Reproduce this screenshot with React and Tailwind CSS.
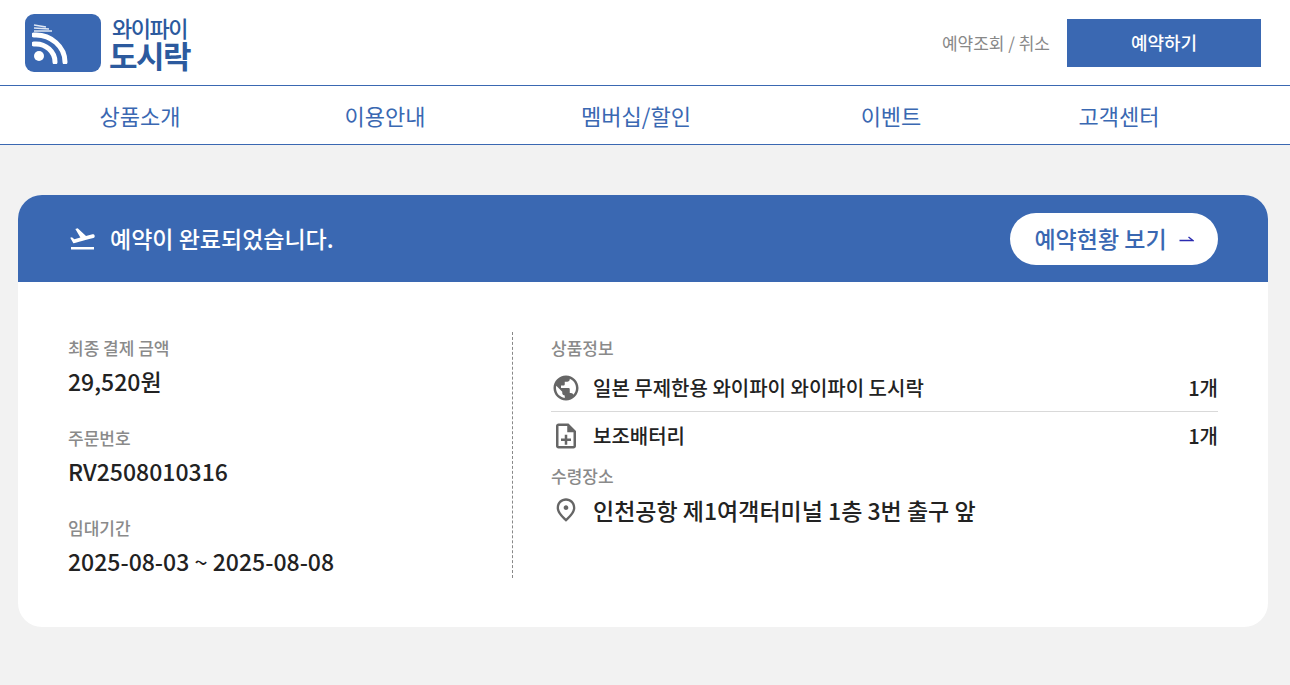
import { MdFlightTakeoff, MdPublic, MdOutlineNoteAdd, MdOutlinePlace } from "react-icons/md";

const navItems = [
  { label: "상품소개", width: "w-[244px]" },
  { label: "이용안내", width: "w-[246px]" },
  { label: "멤버십/할인", width: "w-[256px]" },
  { label: "이벤트", width: "w-[254px]" },
  { label: "고객센터", width: "w-[202px]" },
];

function Logo() {
  return (
    <div className="flex items-center gap-[8px]">
      <div className="flex h-[58px] w-[76px] items-center justify-start rounded-[9px] bg-[#3a68b2] pl-[7px]">
        <svg width="36" height="42" viewBox="0 0 36 42" fill="none">
          <circle cx="7" cy="34" r="5" fill="#fff" />
          <path d="M2 22 C14 21 23 30 23 40" stroke="#fff" strokeWidth="5" strokeLinecap="round" />
          <path d="M2 13 C19 12 33 25 33 40" stroke="#fff" strokeWidth="5" strokeLinecap="round" />
          <path d="M2 3 L14 5 M2 6 L17 7 M2 9 L20 9" stroke="#dfe7f4" strokeWidth="1.5" />
        </svg>
      </div>
      <div className="flex flex-col items-center">
        <span className="text-[22px] leading-[24px] font-medium tracking-[-1.5px] text-[#2c5a9e]">와이파이</span>
        <span className="text-[31px] leading-[32px] font-bold tracking-[-1.5px] text-[#2c5a9e]">도시락</span>
      </div>
    </div>
  );
}

function Info({ label, value }) {
  return (
    <div>
      <p className="text-[17px] leading-[24px] font-medium text-[#8a8a8a]">{label}</p>
      <p className="mt-[6px] text-[23px] leading-[30px] font-medium text-[#222]">{value}</p>
    </div>
  );
}

function ProductRow({ icon, name, count, border }) {
  return (
    <div className={`flex h-[48px] items-center ${border ? "border-b border-[#d9d9d9]" : ""}`}>
      <span className="flex w-[30px] justify-center text-[#666]">{icon}</span>
      <span className="ml-[12px] flex-1 text-[20px] font-medium text-[#222]">{name}</span>
      <span className="text-[20px] font-medium text-[#222]">{count}</span>
    </div>
  );
}

export default function App() {
  return (
    <div className="min-h-screen bg-[#f2f2f2] font-['Noto_Sans_CJK_KR','Noto_Sans',sans-serif]">
      <header className="flex h-[86px] items-center justify-between border-b border-[#3a68b2] bg-white pr-[29px] pl-[25px]">
        <Logo />
        <div className="flex items-center gap-[17px]">
          <a className="text-[17px] text-[#888]">예약조회 / 취소</a>
          <button className="h-[48px] w-[194px] bg-[#3a68b2] text-[18px] font-medium text-white">예약하기</button>
        </div>
      </header>

      <nav className="flex h-[59px] items-center border-b border-[#3a68b2] bg-white pl-[18px]">
        {navItems.map((item) => (
          <a key={item.label} className={`${item.width} text-center text-[22px] text-[#3a68b2]`}>
            {item.label}
          </a>
        ))}
      </nav>

      <main className="px-[18px] pt-[50px] pb-[50px]">
        <section className="w-[1250px] overflow-hidden rounded-[24px] bg-white">
          <div className="flex h-[87px] items-center justify-between bg-[#3a68b2] pr-[50px] pl-[50px]">
            <div className="flex items-center gap-[13px] text-white">
              <MdFlightTakeoff size={29} />
              <h1 className="text-[23px] font-medium">예약이 완료되었습니다.</h1>
            </div>
            <button className="flex h-[52px] w-[208px] items-center justify-center gap-[12px] rounded-full bg-white text-[23px] font-medium text-[#3a68b2]">
              예약현황 보기
              <svg width="15" height="8" viewBox="0 0 15 8" fill="none">
                <path d="M0.5 5.5H14L9.5 2" stroke="#2b2bb0" strokeWidth="1.4" />
              </svg>
            </button>
          </div>

          <div className="flex px-[50px] pt-[50px] pb-[49px]">
            <div className="flex h-[246px] w-[445px] flex-col gap-[30px] border-r border-dashed border-[#888] pt-[4px]">
              <Info label="최종 결제 금액" value="29,520원" />
              <Info label="주문번호" value="RV2508010316" />
              <Info label="임대기간" value="2025-08-03 ~ 2025-08-08" />
            </div>
            <div className="ml-[38px] flex-1 pt-[4px]">
              <p className="text-[17px] leading-[24px] font-medium text-[#8a8a8a]">상품정보</p>
              <div className="mt-[4px]">
                <ProductRow icon={<MdPublic size={30} />} name="일본 무제한용 와이파이 와이파이 도시락" count="1개" border />
                <ProductRow icon={<MdOutlineNoteAdd size={30} />} name="보조배터리" count="1개" />
              </div>
              <p className="mt-[4px] text-[17px] leading-[24px] font-medium text-[#8a8a8a]">수령장소</p>
              <div className="mt-[5px] flex items-center">
                <span className="flex w-[30px] justify-center text-[#666]">
                  <MdOutlinePlace size={28} />
                </span>
                <span className="ml-[12px] text-[23px] leading-[34px] font-medium text-[#222]">인천공항 제1여객터미널 1층 3번 출구 앞</span>
              </div>
            </div>
          </div>
        </section>
      </main>
    </div>
  );
}
